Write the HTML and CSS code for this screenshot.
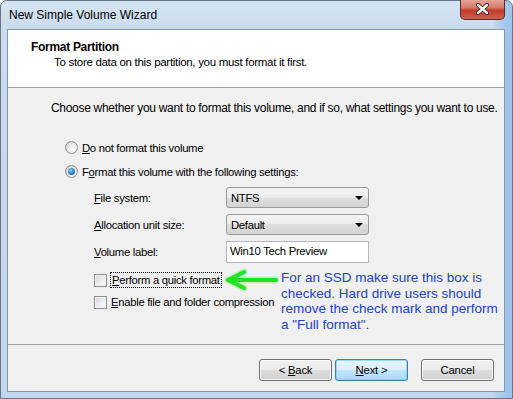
FILE: index.html
```html
<!DOCTYPE html>
<html>
<head>
<meta charset="utf-8">
<link rel="stylesheet" href="styles.css">
</head>
<body>
<div class="window">
  <div class="titlebar">
    <span class="title">New Simple Volume Wizard</span>
    <div class="close">
      <svg width="45" height="20" viewBox="0 0 45 20">
        <path d="M18 6 L27 14 M27 6 L18 14" stroke="#3a2020" stroke-width="4.2" stroke-linecap="round"/>
        <path d="M18 6 L27 14 M27 6 L18 14" stroke="#ffffff" stroke-width="2.4" stroke-linecap="round"/>
      </svg>
    </div>
  </div>
  <div class="client">
    <div class="header">
      <div class="h-title">Format Partition</div>
      <div class="h-sub">To store data on this partition, you must format it first.</div>
    </div>
    <div class="content">
      <div class="intro">Choose whether you want to format this volume, and if so, what settings you want to use.</div>
      <div class="opt first"><span class="radio"></span><span><u>D</u>o not format this volume</span></div>
      <div class="opt"><span class="radio checked"></span><span>F<u>o</u>rmat this volume with the following settings:</span></div>
      <div class="fields">
        <span class="lbl"><u>F</u>ile system:</span>
        <div class="combo"><span>NTFS</span><span class="caret"></span></div>
        <span class="lbl"><u>A</u>llocation unit size:</span>
        <div class="combo"><span>Default</span><span class="caret"></span></div>
        <span class="lbl"><u>V</u>olume label:</span>
        <div class="textbox">Win10 Tech Preview</div>
      </div>
      <div class="quick">
        <div class="checks">
          <div class="chk-row">
            <span class="checkbox"></span><span class="focus"><u>P</u>erform a quick format</span>
            <svg class="arrow" width="56" height="24" viewBox="0 0 56 24">
              <g stroke="#9ff59f" stroke-width="7" stroke-linecap="round" fill="none" opacity="0.6">
                <path d="M5 12 H53 M5 12 L21 4 M5 12 L21 20"/>
              </g>
              <g stroke="#22e022" stroke-width="4" stroke-linecap="round" fill="none">
                <path d="M5 12 H53 M5 12 L21 4 M5 12 L21 20"/>
              </g>
            </svg>
          </div>
          <div class="chk-row"><span class="checkbox"></span><span><u>E</u>nable file and folder compression</span></div>
        </div>
        <div class="note">For an SSD make sure this box is<br>checked. Hard drive users should<br>remove the check mark and perform<br>a "Full format".</div>
      </div>
    </div>
    <div class="footer">
      <div class="btn back">&lt; <u>B</u>ack</div>
      <div class="btn next"><u>N</u>ext &gt;</div>
      <div class="btn cancel">Cancel</div>
    </div>
  </div>
</div>
</body>
</html>
```
FILE: styles.css
```css
body {
  margin: 0;
}
.window {
  position: relative;
  width: 513px;
  height: 399px;
  box-sizing: border-box;
  display: flex;
  flex-direction: column;
  border: 1px solid #66768a;
  border-radius: 7px 7px 0 0;
  background: linear-gradient(90deg, rgba(255,255,255,0) 96%, rgba(150,190,235,0.8) 99%),
              linear-gradient(180deg, #d6e4f2 0, #c9dbed 30px, #c3d7ec 100%);
  font-family: "Liberation Sans", Arial, sans-serif;
  font-size: 12px;
  color: #000;
}
.titlebar {
  height: 28px;
  flex: none;
  padding-left: 8px;
  line-height: 28px;
}
.title {
  font-size: 12px;
  color: #000;
}
.close {
  position: absolute;
  top: -1px;
  right: 7px;
  width: 45px;
  height: 20px;
  box-sizing: border-box;
  border: 1px solid #5a2a2a;
  border-top: none;
  border-radius: 0 0 5px 5px;
  background: linear-gradient(180deg, #e8a599 0, #d47a6a 40%, #c23a2a 55%, #d06050 100%);
}
.close svg {
  position: absolute;
  left: -1px;
  top: -1px;
}
.client {
  flex: 1;
  margin: 0 7px 6px 6px;
  border: 1px solid #8498ae;
  background: #f0f0f0;
  display: flex;
  flex-direction: column;
  font-size: 11.3px;
  letter-spacing: -0.3px;
}
.header {
  flex: none;
  height: 47px;
  padding: 10px 0 0 23px;
  background: #fff;
  border-bottom: 1px solid #a0a0a0;
}
.h-title {
  font-size: 12px;
  font-weight: bold;
  line-height: 15px;
}
.h-sub {
  margin-left: 23px;
  line-height: 15px;
  font-size: 11.5px;
}
.content {
  flex: 1;
  padding: 13px 0 0 43px;
}
.intro {
  font-size: 12px;
  line-height: 15px;
  white-space: nowrap;
}
.opt {
  display: flex;
  align-items: center;
  gap: 4px;
  height: 15px;
  margin-top: 9px;
  padding-left: 14px;
}
.opt.first {
  margin-top: 24px;
}
.radio {
  width: 11px;
  height: 11px;
  border: 1px solid #8c8c8c;
  border-radius: 50%;
  background: radial-gradient(circle at 60% 65%, #ffffff 0, #e8e8e8 45%, #c8c8c8 100%);
  position: relative;
}
.radio.checked::after {
  content: "";
  position: absolute;
  left: 2px;
  top: 2px;
  width: 7px;
  height: 7px;
  border-radius: 50%;
  background: radial-gradient(circle at 40% 35%, #9fd6f7 0, #2f8bc8 45%, #1a4f86 100%);
}
.fields {
  display: grid;
  grid-template-columns: 132px 143px;
  grid-auto-rows: 21px;
  row-gap: 6px;
  margin: 8px 0 0 43px;
  align-items: center;
}
.combo {
  height: 21px;
  box-sizing: border-box;
  border: 1px solid #9a9a9a;
  border-radius: 3px;
  background: linear-gradient(180deg, #f4f4f4 0, #ececec 50%, #dedede 50%, #d4d4d4 100%);
  display: flex;
  align-items: center;
  justify-content: space-between;
  padding: 0 5px 0 4px;
}
.caret {
  width: 0;
  height: 0;
  border-left: 4px solid transparent;
  border-right: 4px solid transparent;
  border-top: 4px solid #000;
}
.textbox {
  height: 22px;
  box-sizing: border-box;
  border: 1px solid #b4b8be;
  background: #fff;
  padding-left: 3px;
  line-height: 19px;
  align-self: start;
}
.quick {
  display: flex;
  margin: 7px 0 0 43px;
}
.checks {
  width: 187px;
  flex: none;
}
.chk-row {
  display: flex;
  align-items: center;
  height: 22px;
  white-space: nowrap;
}
.checkbox {
  flex: none;
  width: 11px;
  height: 11px;
  border: 1px solid #8e8f8f;
  background: linear-gradient(135deg, #d2d4d8 0, #f0f0f0 60%, #fdfdfd 100%);
  box-shadow: inset 0 0 0 1px #f4f4f4;
  margin-right: 4px;
}
.focus {
  outline: 1px dotted #000;
  outline-offset: 0;
  padding: 0 1px;
  line-height: 14px;
}
.arrow {
  margin-left: auto;
  margin-right: 2px;
  flex: none;
}
.note {
  padding-top: 1px;
  font-size: 13.5px;
  line-height: 15.7px;
  letter-spacing: 0;
  color: #2242cc;
  white-space: nowrap;
}
.footer {
  flex: none;
  height: 32px;
  border-top: 1px solid #a0a0a0;
  padding: 14px 10px 0 0;
  display: flex;
  justify-content: flex-end;
}
.btn {
  width: 73px;
  height: 22px;
  box-sizing: border-box;
  border: 1px solid #707070;
  border-radius: 3px;
  background: linear-gradient(180deg, #f2f2f2 0, #ebebeb 48%, #dddddd 52%, #cfcfcf 100%);
  text-align: center;
  line-height: 20px;
  letter-spacing: -0.2px;
  box-shadow: inset 0 0 0 1px rgba(255,255,255,0.8);
}
.back {
  margin-right: 3px;
}
.next {
  margin-right: 13px;
  border-color: #3c7fb1;
  background: linear-gradient(180deg, #eaf6fd 0, #d9f0fc 48%, #bee6fd 52%, #a7d9f5 100%);
  box-shadow: inset 0 0 0 1px rgba(110,210,250,0.7);
}
```
